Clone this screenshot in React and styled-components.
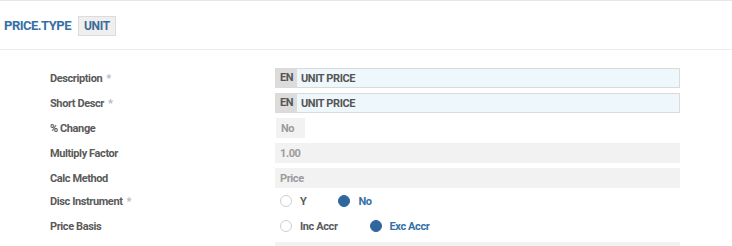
import React from "react";
import styled, { createGlobalStyle } from "styled-components";

const GlobalStyle = createGlobalStyle`
  body {
    margin: 0;
    background: #ffffff;
    font-family: Roboto, "Liberation Sans", Arial, sans-serif;
  }
`;

const Page = styled.div`
  width: 732px;
  height: 246px;
  overflow: hidden;
`;

const Header = styled.div`
  height: 48px;
  border-top: 1px solid #e6e6e6;
  border-bottom: 1px solid #ececec;
  display: flex;
  align-items: center;
  gap: 7px;
  padding-left: 4px;
`;

const Title = styled.span`
  font-size: 13px;
  font-weight: 700;
  letter-spacing: -0.5px;
  color: #3470a7;
`;

const Badge = styled.span`
  height: 18px;
  padding: 0 5px;
  display: flex;
  align-items: center;
  background: #efefef;
  border: 1px solid #dcdcdc;
  font-size: 12px;
  font-weight: 700;
  letter-spacing: -0.3px;
  color: #3d6a98;
  margin-top: 1px;
`;

const Form = styled.div`
  padding: 18px 0 0 50px;
  display: flex;
  flex-direction: column;
  gap: 5px;
`;

const Row = styled.div`
  display: grid;
  grid-template-columns: 225px 405px;
  align-items: center;
  min-height: 20px;
  margin-top: ${(p) => p.$shift || 0}px;
`;

const Label = styled.div`
  font-size: 11px;
  font-weight: 700;
  letter-spacing: -0.4px;
  color: #5a5a5a;
`;

const Star = styled.span`
  color: #b8b8b8;
  margin-left: 4px;
`;

const LangInput = styled.div`
  height: 18px;
  display: flex;
  border: 1px solid #dadada;
  background: #eef7fb;
  font-size: 11px;
  font-weight: 700;
  letter-spacing: -0.4px;
  color: #555;
`;

const Lang = styled.span`
  width: 21px;
  background: #dcdcdc;
  display: flex;
  align-items: center;
  justify-content: center;
  padding-bottom: 2px;
  box-sizing: border-box;
`;

const LangValue = styled.span`
  display: flex;
  align-items: center;
  padding-left: 4px;
`;

const ReadOnly = styled.div`
  height: 20px;
  width: ${(p) => (p.$short ? "29px" : "auto")};
  margin-left: ${(p) => (p.$short ? "1px" : "0")};
  box-sizing: border-box;
  background: #f2f2f2;
  display: flex;
  align-items: center;
  padding-left: 5px;
  font-size: 11px;
  font-weight: 700;
  letter-spacing: -0.4px;
  color: #9b9b9b;
`;

const Radios = styled.div`
  display: flex;
  align-items: center;
  padding-left: 5px;
  gap: 32px;
`;

const Option = styled.label`
  display: flex;
  align-items: center;
  gap: 8px;
  font-size: 11px;
  font-weight: 700;
  letter-spacing: -0.4px;
  color: ${(p) => (p.$checked ? "#3470a7" : "#5a5a5a")};
`;

const Dot = styled.span`
  width: 12px;
  height: 12px;
  border-radius: 50%;
  box-sizing: border-box;
  border: 1px solid ${(p) => (p.$checked ? "#2f669e" : "#cfcfcf")};
  background: ${(p) => (p.$checked ? "#2f669e" : "#fff")};
`;

const Spacer = styled.div`
  height: 20px;
`;

function RadioGroup({ options, value }) {
  return (
    <Radios>
      {options.map((o) => (
        <Option key={o} $checked={o === value}>
          <Dot $checked={o === value} />
          {o}
        </Option>
      ))}
    </Radios>
  );
}

export default function App() {
  return (
    <Page>
      <GlobalStyle />
      <Header>
        <Title>PRICE.TYPE</Title>
        <Badge>UNIT</Badge>
      </Header>
      <Form>
        <Row>
          <Label>
            Description<Star>*</Star>
          </Label>
          <LangInput>
            <Lang>EN</Lang>
            <LangValue>UNIT PRICE</LangValue>
          </LangInput>
        </Row>
        <Row>
          <Label>
            Short Descr<Star>*</Star>
          </Label>
          <LangInput>
            <Lang>EN</Lang>
            <LangValue>UNIT PRICE</LangValue>
          </LangInput>
        </Row>
        <Row>
          <Label>% Change</Label>
          <ReadOnly $short>No</ReadOnly>
        </Row>
        <Row>
          <Label>Multiply Factor</Label>
          <ReadOnly>1.00</ReadOnly>
        </Row>
        <Row>
          <Label>Calc Method</Label>
          <ReadOnly>Price</ReadOnly>
        </Row>
        <Row $shift={-2}>
          <Label>
            Disc Instrument<Star>*</Star>
          </Label>
          <RadioGroup options={["Y", "No"]} value="No" />
        </Row>
        <Row>
          <Label>Price Basis</Label>
          <RadioGroup options={["Inc Accr", "Exc Accr"]} value="Exc Accr" />
        </Row>
        <Row $shift={1}>
          <Spacer />
          <ReadOnly />
        </Row>
      </Form>
    </Page>
  );
}
